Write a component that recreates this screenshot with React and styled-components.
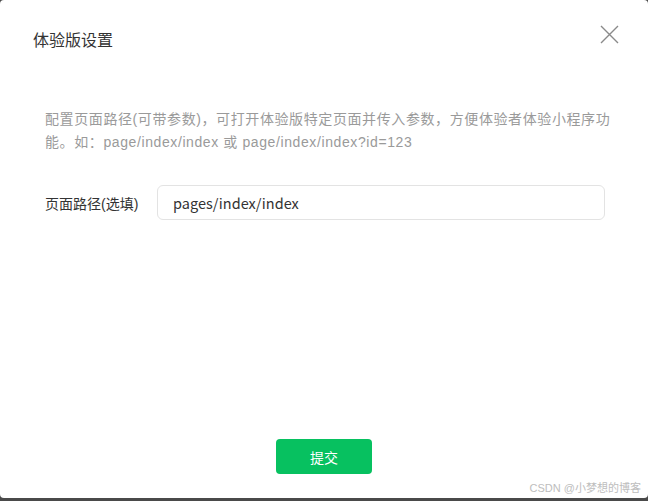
import React from 'react';
import styled, { createGlobalStyle } from 'styled-components';

const GlobalStyle = createGlobalStyle`
  html, body {
    margin: 0;
    padding: 0;
    background: #4a4a4a;
    height: 100%;
  }
  #root {
    height: 100%;
  }
  * {
    box-sizing: border-box;
  }
`;

const font = `"Liberation Sans", "Noto Sans CJK SC", sans-serif`;

const Dialog = styled.div`
  position: relative;
  width: 648px;
  height: 498px;
  background: #fff;
  border-radius: 4px;
  font-family: ${font};
  display: flex;
  flex-direction: column;
`;

const Header = styled.div`
  display: flex;
  justify-content: space-between;
  align-items: flex-start;
  padding: 29px 29px 0 33px;
`;

const Title = styled.h2`
  margin: 0;
  font-size: 16px;
  font-weight: 400;
  color: #333;
  line-height: 24px;
`;

const CloseButton = styled.button`
  border: none;
  background: none;
  padding: 0;
  margin-top: -5px;
  cursor: pointer;
  width: 20px;
  height: 20px;
  display: flex;
  align-items: center;
  justify-content: center;
`;

const Body = styled.div`
  flex: 1;
  padding: 55px 43px 0 45px;
`;

const Hint = styled.p`
  margin: 0;
  width: 580px;
  font-size: 14px;
  letter-spacing: 0.6px;
  line-height: 23px;
  color: #9a9a9a;
`;

const Field = styled.div`
  display: flex;
  align-items: center;
  margin-top: 31px;
`;

const Label = styled.label`
  width: 112px;
  font-size: 14px;
  color: #333;
`;

const Input = styled.input`
  flex: 1;
  height: 35px;
  border: 1px solid #e3e3e3;
  border-radius: 6px;
  padding: 0 15px;
  font-family: "Noto Sans CJK SC", "Noto Sans", sans-serif;
  font-size: 14.5px;
  color: #333;
  outline: none;
`;

const Footer = styled.div`
  display: flex;
  justify-content: center;
  padding-bottom: 24px;
`;

const SubmitButton = styled.button`
  width: 96px;
  height: 35px;
  border: none;
  border-radius: 4px;
  background: #07c160;
  color: #fff;
  font-family: ${font};
  font-size: 14px;
  cursor: pointer;
`;

const Watermark = styled.span`
  position: absolute;
  right: 7px;
  bottom: 3px;
  font-size: 11px;
  color: #bdbdbd;
`;

const App = () => {
  return (
    <>
      <GlobalStyle />
      <Dialog>
        <Header>
          <Title>体验版设置</Title>
          <CloseButton aria-label="关闭">
            <svg width="19" height="19" viewBox="0 0 19 19">
              <path d="M1 1L18 18M18 1L1 18" stroke="#8a8a8a" strokeWidth="1.4" />
            </svg>
          </CloseButton>
        </Header>
        <Body>
          <Hint>
            配置页面路径(可带参数)，可打开体验版特定页面并传入参数，方便体验者体验小程序功能。如：page/index/index 或 page/index/index?id=123
          </Hint>
          <Field>
            <Label>页面路径(选填)</Label>
            <Input defaultValue="pages/index/index" />
          </Field>
        </Body>
        <Footer>
          <SubmitButton>提交</SubmitButton>
        </Footer>
        <Watermark>CSDN @小梦想的博客</Watermark>
      </Dialog>
    </>
  );
};

export default App;
